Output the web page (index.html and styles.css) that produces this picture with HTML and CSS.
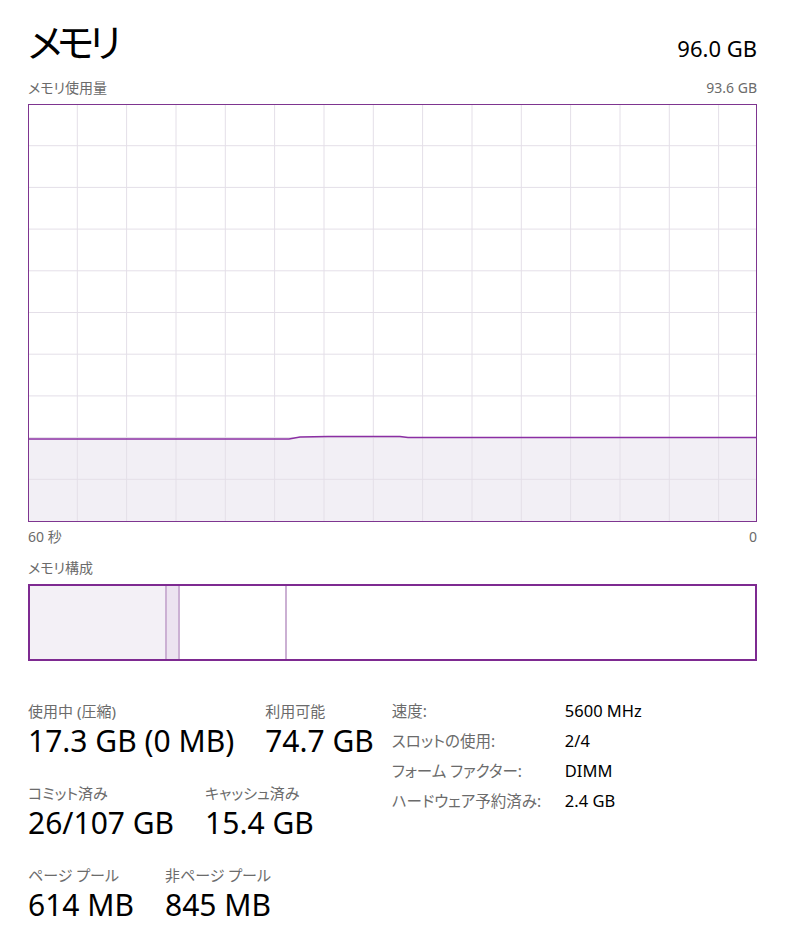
FILE: index.html
```html
<!DOCTYPE html>
<html lang="ja">
<head>
    <meta charset="UTF-8">
    <meta name="viewport" content="width=device-width, initial-scale=1.0">
    <title>メモリ</title>
    <link rel="stylesheet" href="styles.css">
</head>
<body>
    <div class="page">
        <div class="header">
            <h1>メモリ</h1>
            <span class="total">96.0 GB</span>
        </div>

        <div class="caption-row">
            <span>メモリ使用量</span>
            <span>93.6 GB</span>
        </div>

        <svg class="usage-graph" width="729" height="418" viewBox="0 0 729 418">
            <polygon class="fill" points="1,335 261,335 272,333 300,332.5 372,332.5 380,333.5 728,333.5 728,417 1,417"></polygon>
            <g class="grid">
                <line x1="49.3" y1="0" x2="49.3" y2="418"></line>
                <line x1="98.6" y1="0" x2="98.6" y2="418"></line>
                <line x1="148" y1="0" x2="148" y2="418"></line>
                <line x1="197.3" y1="0" x2="197.3" y2="418"></line>
                <line x1="246.6" y1="0" x2="246.6" y2="418"></line>
                <line x1="296" y1="0" x2="296" y2="418"></line>
                <line x1="345.3" y1="0" x2="345.3" y2="418"></line>
                <line x1="394.6" y1="0" x2="394.6" y2="418"></line>
                <line x1="444" y1="0" x2="444" y2="418"></line>
                <line x1="493.3" y1="0" x2="493.3" y2="418"></line>
                <line x1="542.6" y1="0" x2="542.6" y2="418"></line>
                <line x1="592" y1="0" x2="592" y2="418"></line>
                <line x1="641.3" y1="0" x2="641.3" y2="418"></line>
                <line x1="690.6" y1="0" x2="690.6" y2="418"></line>
                <line x1="0" y1="41.7" x2="729" y2="41.7"></line>
                <line x1="0" y1="83.4" x2="729" y2="83.4"></line>
                <line x1="0" y1="125.1" x2="729" y2="125.1"></line>
                <line x1="0" y1="166.8" x2="729" y2="166.8"></line>
                <line x1="0" y1="208.5" x2="729" y2="208.5"></line>
                <line x1="0" y1="250.2" x2="729" y2="250.2"></line>
                <line x1="0" y1="291.9" x2="729" y2="291.9"></line>
                <line x1="0" y1="333.6" x2="729" y2="333.6"></line>
                <line x1="0" y1="375.3" x2="729" y2="375.3"></line>
            </g>
            <polyline class="line" points="1,335 261,335 272,333 300,332.5 372,332.5 380,333.5 728,333.5"></polyline>
            <rect class="frame" x="0.5" y="0.5" width="728" height="417"></rect>
        </svg>

        <div class="caption-row axis">
            <span>60 秒</span>
            <span>0</span>
        </div>

        <div class="caption-row">
            <span>メモリ構成</span>
        </div>

        <div class="composition">
            <div class="seg in-use"></div>
            <div class="seg modified"></div>
            <div class="seg standby"></div>
            <div class="seg free"></div>
        </div>

        <div class="stats">
            <div class="stat-rows">
                <div class="stat-row">
                    <div class="stat">
                        <div class="label">使用中 (圧縮)</div>
                        <div class="value">17.3 GB (0 MB)</div>
                    </div>
                    <div class="stat">
                        <div class="label">利用可能</div>
                        <div class="value">74.7 GB</div>
                    </div>
                </div>
                <div class="stat-row">
                    <div class="stat">
                        <div class="label">コミット済み</div>
                        <div class="value">26/107 GB</div>
                    </div>
                    <div class="stat">
                        <div class="label">キャッシュ済み</div>
                        <div class="value">15.4 GB</div>
                    </div>
                </div>
                <div class="stat-row">
                    <div class="stat">
                        <div class="label">ページ プール</div>
                        <div class="value">614 MB</div>
                    </div>
                    <div class="stat">
                        <div class="label">非ページ プール</div>
                        <div class="value">845 MB</div>
                    </div>
                </div>
            </div>

            <dl class="details">
                <dt>速度:</dt>
                <dd>5600 MHz</dd>
                <dt>スロットの使用:</dt>
                <dd>2/4</dd>
                <dt>フォーム ファクター:</dt>
                <dd>DIMM</dd>
                <dt>ハードウェア予約済み:</dt>
                <dd>2.4 GB</dd>
            </dl>
        </div>
    </div>
</body>
</html>
```

FILE: styles.css
```css
body {
    margin: 0;
    background-color: #fff;
    color: #000;
    font-family: "Noto Sans", "Noto Sans CJK JP", sans-serif;
    font-feature-settings: "palt";
}

.page {
    width: 729px;
    padding: 14px 0 0 28px;
}

.header {
    display: flex;
    justify-content: space-between;
    align-items: baseline;
    height: 56px;
}

h1 {
    margin: 0;
    font-size: 39px;
    font-weight: 400;
    letter-spacing: -5px;
    line-height: 56px;
}

.total {
    font-size: 22px;
}

.caption-row {
    display: flex;
    justify-content: space-between;
    height: 34px;
    align-items: center;
    font-size: 14px;
    color: #6b6b6b;
}

.usage-graph {
    display: block;
}

.usage-graph .fill {
    fill: #f2eff5;
}

.usage-graph .grid line {
    stroke: #e4dfe8;
    stroke-width: 1;
}

.usage-graph .line {
    fill: none;
    stroke: #8b2fa3;
    stroke-width: 1.4;
}

.usage-graph .frame {
    fill: none;
    stroke: #7e3590;
    stroke-width: 1;
}

.axis {
    height: 28px;
}

.composition {
    display: flex;
    height: 73px;
    border: 2px solid #7e2a91;
}

.seg {
    border-right: 2px solid #cbb0d3;
}

.in-use {
    width: 135px;
    background-color: #f3f0f6;
}

.modified {
    width: 11px;
    background-color: #ece3f0;
}

.standby {
    width: 105px;
}

.free {
    flex: 1;
    border-right: none;
}

.stats {
    display: flex;
    gap: 18px;
    margin-top: 40px;
}

.stat-rows {
    display: flex;
    flex-direction: column;
    gap: 22px;
}

.stat-row {
    display: flex;
    gap: 31px;
}

.label {
    font-size: 15px;
    line-height: 20px;
    color: #6b6b6b;
}

.value {
    font-size: 30px;
    line-height: 40px;
}

.details {
    display: grid;
    grid-template-columns: 173px auto;
    grid-auto-rows: 30px;
    margin: 0;
    line-height: 20px;
}

.details dt {
    font-size: 15.5px;
    color: #6b6b6b;
}

.details dd {
    margin: 0;
    font-size: 16.5px;
    color: #000;
}
```
